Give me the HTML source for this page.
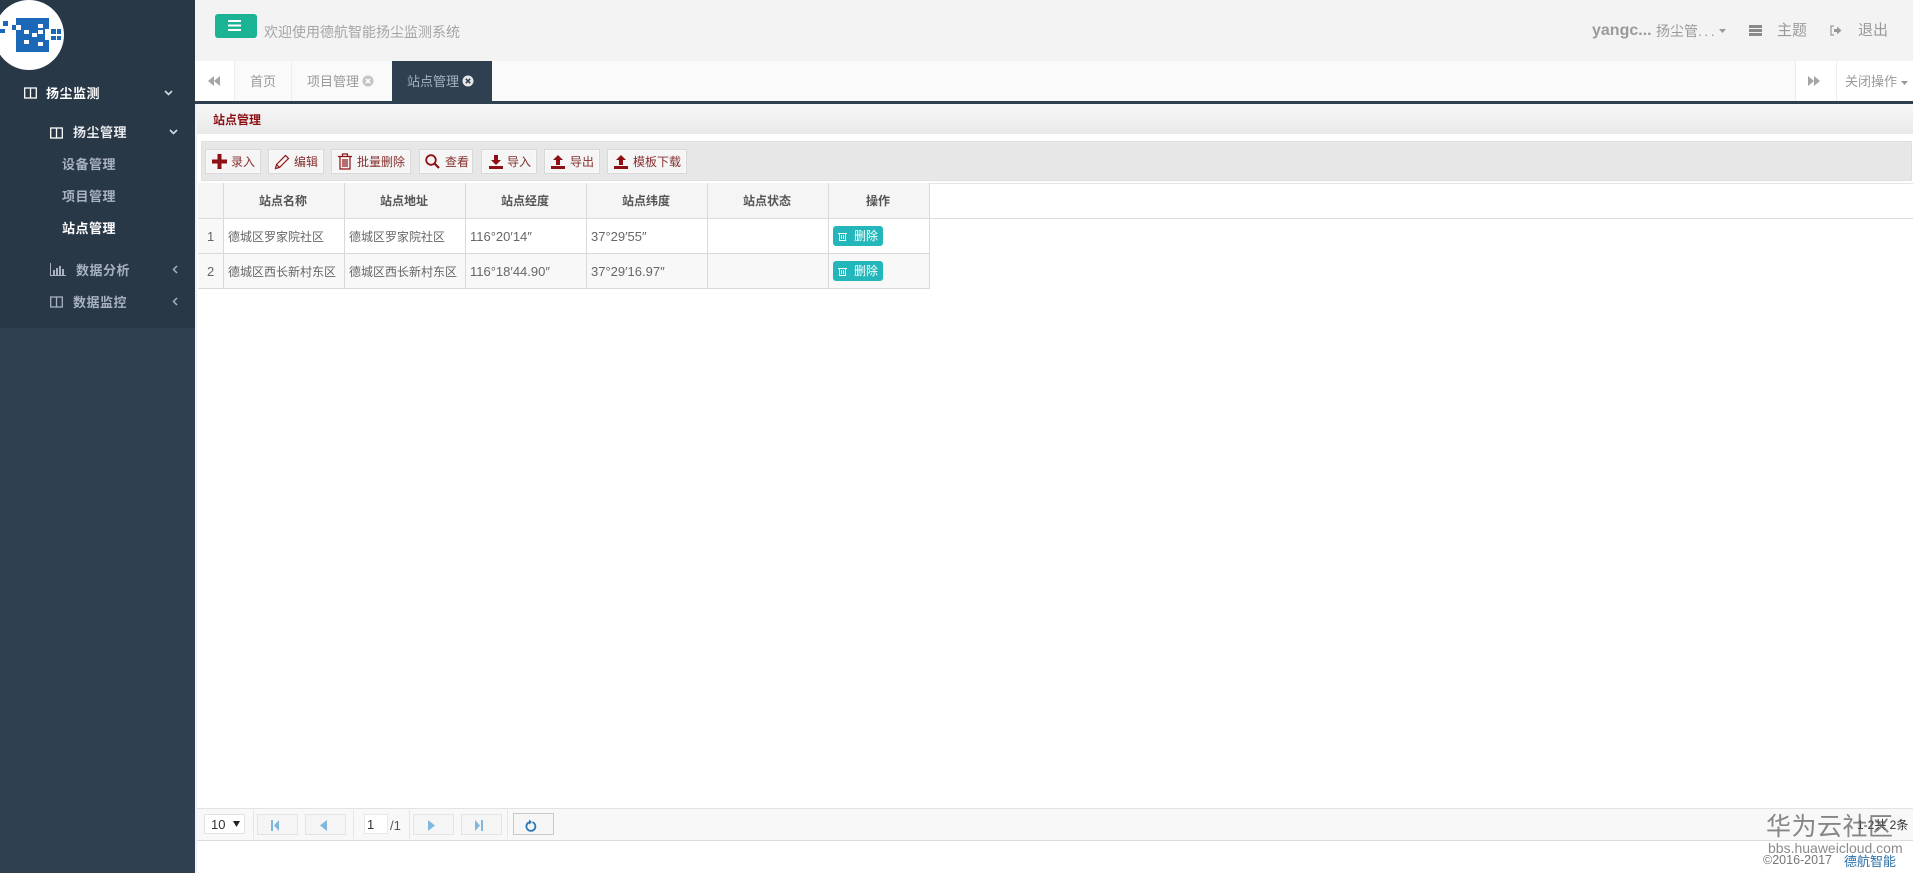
<!DOCTYPE html>
<html lang="zh">
<head>
<meta charset="utf-8">
<title>站点管理</title>
<style>
html,body{margin:0;padding:0;width:1913px;height:873px;overflow:hidden;background:#fff}
body{position:relative;font-family:"Liberation Sans","Noto Sans CJK SC",sans-serif;font-size:12px;color:#676a6c}
div,span,a{position:absolute;white-space:nowrap;box-sizing:border-box}
svg{position:absolute;display:block}
.nav{color:#a7b1c2;font-size:13px;font-weight:700;line-height:18px;letter-spacing:.5px}
.btn{top:149px;height:25px;background:#f5f5f5;border:1px solid #d8d8d8;box-shadow:inset 0 0 2px #fff;color:#7c1010;line-height:24px}
.btn span{top:0;line-height:25px;font-size:12px;color:#85302f}
.th{top:183px;height:35px;background:#f5f5f5;border-right:1px solid #d9d9d9;text-align:center;line-height:37px;font-weight:700;font-size:12px;color:#555;padding-right:2px}
.td{height:35px;border-right:1px solid #d9d9d9;border-bottom:1px solid #d9d9d9;line-height:36px;padding-left:4px;font-size:12px;color:#666;background:#fff}
.num{font-size:13px}
.del{left:833px;width:50px;height:20px;background:#23b7bb;border-radius:3px;color:#fff;font-size:12px;line-height:21px}
.pg{top:814px;width:41px;height:21px;background:#f5f5f5;border:1px solid #e4e4e4}
.sep{top:810px;width:1px;height:29px;background:#e6e6e6}
.tab{top:61px;height:40px;line-height:42px;color:#999;font-size:13px}
</style>
</head>
<body>
<!-- sidebar -->
<div style="left:0;top:0;width:195px;height:873px;background:#2f4050"></div>
<div style="left:0;top:0;width:195px;height:328px;background:#293846"></div>
<svg style="left:0;top:0" width="70" height="72" viewBox="0 0 70 72">
<circle cx="29" cy="35" r="35" fill="#fff"/>
<rect x="16" y="18" width="33" height="34" fill="#1b68b8"/>
<g fill="#1b68b8"><rect x="3" y="21" width="5" height="5"/><rect x="0" y="29" width="5" height="4"/><rect x="12" y="25" width="4" height="5"/>
<rect x="51" y="29" width="5" height="5"/><rect x="51" y="36" width="5" height="4"/><rect x="57" y="29" width="4" height="5"/><rect x="57" y="36" width="4" height="4"/></g>
<g fill="#fff"><rect x="16" y="25" width="5" height="5"/><rect x="24" y="30" width="5" height="4"/><rect x="38" y="24" width="5" height="4"/><rect x="38" y="30" width="5" height="4"/><rect x="32" y="33" width="5" height="4"/><rect x="24" y="40" width="5" height="4"/><rect x="38" y="42" width="5" height="4"/><rect x="45" y="29" width="4" height="11"/></g>
</svg>

<svg style="left:24px;top:87px" width="13" height="12" viewBox="0 0 13 12" fill="none" stroke="#fff" stroke-width="1.3"><rect x=".7" y="1" width="11.6" height="10"/><path d="M6.5 1v10"/></svg>
<div class="nav" style="left:46px;top:85px;color:#fff">扬尘监测</div>
<svg style="left:164px;top:90px" width="9" height="6" viewBox="0 0 9 6" fill="none" stroke="#d5dbe3" stroke-width="1.6"><path d="M1 1l3.5 3.5L8 1"/></svg>

<svg style="left:50px;top:127px" width="13" height="12" viewBox="0 0 13 12" fill="none" stroke="#fff" stroke-width="1.3"><rect x=".7" y="1" width="11.6" height="10"/><path d="M6.5 1v10"/></svg>
<div class="nav" style="left:73px;top:124px;color:#e6e9ee">扬尘管理</div>
<svg style="left:169px;top:129px" width="9" height="6" viewBox="0 0 9 6" fill="none" stroke="#d5dbe3" stroke-width="1.6"><path d="M1 1l3.5 3.5L8 1"/></svg>
<div class="nav" style="left:62px;top:156px">设备管理</div>
<div class="nav" style="left:62px;top:188px">项目管理</div>
<div class="nav" style="left:62px;top:220px;color:#fff">站点管理</div>

<svg style="left:50px;top:263px" width="16" height="13" viewBox="0 0 16 13" fill="#a7b1c2"><path d="M0 0h1v12h15v1H0z"/><rect x="3" y="7" width="2" height="5"/><rect x="6" y="5" width="2" height="7"/><rect x="9" y="3" width="2" height="9"/><rect x="12" y="6" width="2" height="6"/></svg>
<div class="nav" style="left:76px;top:262px">数据分析</div>
<svg style="left:172px;top:265px" width="6" height="9" viewBox="0 0 6 9" fill="none" stroke="#a7b1c2" stroke-width="1.5"><path d="M5 1L1.5 4.5 5 8"/></svg>
<svg style="left:50px;top:296px" width="13" height="12" viewBox="0 0 13 12" fill="none" stroke="#a7b1c2" stroke-width="1.3"><rect x=".7" y="1" width="11.6" height="10"/><path d="M6.5 1v10"/></svg>
<div class="nav" style="left:73px;top:294px">数据监控</div>
<svg style="left:172px;top:297px" width="6" height="9" viewBox="0 0 6 9" fill="none" stroke="#a7b1c2" stroke-width="1.5"><path d="M5 1L1.5 4.5 5 8"/></svg>

<!-- top bar -->
<div style="left:195px;top:0;width:1718px;height:61px;background:#f3f3f4"></div>
<div style="left:215px;top:14px;width:42px;height:24px;background:#1ab394;border-radius:3px"></div>
<svg style="left:228px;top:20px" width="14" height="12" viewBox="0 0 14 12" fill="#fff"><rect y="0" width="13" height="2"/><rect y="4.5" width="13" height="2"/><rect y="9" width="13" height="2"/></svg>
<div style="left:264px;top:22px;font-size:14px;line-height:20px;color:#a5a5a5">欢迎使用德航智能扬尘监测系统</div>

<div style="left:1592px;top:21px;font-size:16px;line-height:20px;font-weight:700;color:#9a9a9a">yangc...</div>
<div style="left:1656px;top:21px;font-size:14px;line-height:20px;color:#9a9a9a">扬尘管<span style="position:static;letter-spacing:2.500px">...</span></div>
<svg style="left:1719px;top:29px" width="8" height="4"><path d="M0 0h7L3.5 4z" fill="#999"/></svg>
<svg style="left:1749px;top:25px" width="13" height="11" viewBox="0 0 13 11" fill="#8a8a8a"><rect width="13" height="3"/><rect y="4" width="13" height="3"/><rect y="8" width="13" height="3"/></svg>
<div style="left:1777px;top:21px;font-size:15px;line-height:20px;color:#999">主题</div>
<svg style="left:1830px;top:25px" width="12" height="11" viewBox="0 0 12 11"><path d="M4 1H1v9h3" fill="none" stroke="#999" stroke-width="1.2"/><path d="M4 4h3V1.5L11.5 5.5 7 9.500V7H4z" fill="#999"/></svg>
<div style="left:1858px;top:21px;font-size:15px;line-height:20px;color:#999">退出</div>

<!-- tabs -->
<div style="left:195px;top:61px;width:1718px;height:40px;background:#fafafa"></div>
<div style="left:195px;top:61px;width:39px;height:40px;background:#fff"></div>
<svg style="left:208px;top:76px" width="12" height="10" viewBox="0 0 12 10" fill="#a5a5a5"><path d="M6 0v10L0 5zM12 0v10L6 5z"/></svg>
<div class="tab" style="left:234px;width:58px;text-align:center;border-left:1px solid #eee;border-right:1px solid #eee">首页</div>
<div class="tab" style="left:292px;width:100px;padding-left:15px">项目管理</div>
<svg style="left:362px;top:75px" width="12" height="12" viewBox="0 0 12 12"><circle cx="6" cy="6" r="5.500" fill="#c4c4c4"/><path d="M3.800 3.800l4.400 4.400M8.200 3.800l-4.400 4.400" stroke="#fff" stroke-width="1.500"/></svg>
<div class="tab" style="left:392px;width:100px;padding-left:15px;background:#2f4050;color:#a7b1c2">站点管理</div>
<svg style="left:462px;top:75px" width="12" height="12" viewBox="0 0 12 12"><circle cx="6" cy="6" r="5.500" fill="#e8e8e8"/><path d="M3.800 3.800l4.400 4.400M8.200 3.800l-4.400 4.400" stroke="#2f4050" stroke-width="1.500"/></svg>
<div style="left:1795px;top:61px;width:41px;height:40px;background:#fff;border-left:1px solid #eee"></div>
<svg style="left:1808px;top:76px" width="12" height="10" viewBox="0 0 12 10" fill="#a5a5a5"><path d="M0 0v10l6-5zM6 0v10l6-5z"/></svg>
<div class="tab" style="left:1836px;width:77px;padding-left:8px;background:#fff;border-left:1px solid #eee;font-size:13px;color:#999">关闭操作</div>
<svg style="left:1901px;top:81px" width="8" height="4"><path d="M0 0h7L3.5 4z" fill="#999"/></svg>
<div style="left:195px;top:101px;width:1718px;height:3px;background:#2f4050"></div>

<!-- content -->
<div style="left:195px;top:104px;width:2px;height:769px;background:#eef2f6"></div>
<div style="left:197px;top:104px;width:1716px;height:30px;background:linear-gradient(#f7f7f7,#e9e9e9)"></div>
<div style="left:213px;top:112px;font-size:12px;line-height:17px;font-weight:700;color:#8b0f14">站点管理</div>

<div style="left:201px;top:141px;width:1711px;height:40px;background:#e7e7e7;border:1px solid #e0e0e0"></div>
<div class="btn" style="left:205px;width:56px"><span style="left:25px">录入</span></div>
<svg style="left:212px;top:154px" width="15" height="15" viewBox="0 0 15 15" fill="#8e1014"><path d="M5.500 0h4v5.500H15v4H9.500V15h-4V9.500H0v-4h5.500z"/></svg>
<div class="btn" style="left:268px;width:56px"><span style="left:25px">编辑</span></div>
<svg style="left:274px;top:154px" width="16" height="16" viewBox="0 0 16 16" fill="none" stroke="#8e1014" stroke-width="1.200"><path d="M1.500 14.500l1-4L11.500 1.500l3 3-9 9z"/><path d="M2.500 10.500l3 3"/></svg>
<div class="btn" style="left:331px;width:80px"><span style="left:25px">批量删除</span></div>
<svg style="left:338px;top:153px" width="14" height="17" viewBox="0 0 14 17" fill="none" stroke="#8e1014" stroke-width="1.200"><path d="M0 3.500h14M4.500 3.500V1h5v2.500M2 3.500V16h10V3.500M5 6v8M7 6v8M9 6v8"/></svg>
<div class="btn" style="left:419px;width:54px"><span style="left:25px">查看</span></div>
<svg style="left:425px;top:154px" width="15" height="15" viewBox="0 0 15 15" fill="none" stroke="#8e1014" stroke-width="1.800"><circle cx="6" cy="6" r="4.800"/><path d="M9.500 9.500l4.500 4.500" stroke-width="2.200"/></svg>
<div class="btn" style="left:481px;width:56px"><span style="left:25px">导入</span></div>
<svg style="left:489px;top:155px" width="14" height="14" viewBox="0 0 14 14" fill="#8e1014"><path d="M5 0h4v5h3L7 10 2 5h3zM0 11h14v3H0z"/></svg>
<div class="btn" style="left:544px;width:56px"><span style="left:25px">导出</span></div>
<svg style="left:551px;top:155px" width="14" height="14" viewBox="0 0 14 14" fill="#8e1014"><path d="M5 10h4V5h3L7 0 2 5h3zM0 11h14v3H0z"/></svg>
<div class="btn" style="left:607px;width:80px"><span style="left:25px">模板下载</span></div>
<svg style="left:614px;top:155px" width="14" height="14" viewBox="0 0 14 14" fill="#8e1014"><path d="M5 10h4V5h3L7 0 2 5h3zM0 11h14v3H0z"/></svg>

<!-- table -->
<div style="left:198px;top:183px;width:1715px;height:1px;background:#e6e6e6"></div>
<div style="left:198px;top:218px;width:1715px;height:1px;background:#dcdcdc"></div>
<div class="th" style="left:198px;width:26px"></div>
<div class="th" style="left:224px;width:121px">站点名称</div>
<div class="th" style="left:345px;width:121px">站点地址</div>
<div class="th" style="left:466px;width:121px">站点经度</div>
<div class="th" style="left:587px;width:121px">站点纬度</div>
<div class="th" style="left:708px;width:121px">站点状态</div>
<div class="th" style="left:829px;width:101px">操作</div>

<div class="td num" style="left:198px;top:219px;width:26px;background:#f8f8f8;padding-left:9px">1</div>
<div class="td" style="left:224px;top:219px;width:121px">德城区罗家院社区</div>
<div class="td" style="left:345px;top:219px;width:121px">德城区罗家院社区</div>
<div class="td num" style="left:466px;top:219px;width:121px">116°20′14″</div>
<div class="td num" style="left:587px;top:219px;width:121px">37°29′55″</div>
<div class="td" style="left:708px;top:219px;width:121px"></div>
<div class="td" style="left:829px;top:219px;width:101px"></div>
<div class="td num" style="left:198px;top:254px;width:26px;background:#f8f8f8;padding-left:9px">2</div>
<div class="td" style="left:224px;top:254px;width:121px;background:#f8f8f8">德城区西长新村东区</div>
<div class="td" style="left:345px;top:254px;width:121px;background:#f8f8f8">德城区西长新村东区</div>
<div class="td num" style="left:466px;top:254px;width:121px;background:#f8f8f8">116°18′44.90″</div>
<div class="td num" style="left:587px;top:254px;width:121px;background:#f8f8f8">37°29′16.97″</div>
<div class="td" style="left:708px;top:254px;width:121px;background:#f8f8f8"></div>
<div class="td" style="left:829px;top:254px;width:101px;background:#f8f8f8"></div>

<div class="del" style="top:226px"><span style="left:21px;top:0">删除</span></div>
<svg style="left:838px;top:232px" width="9" height="9" viewBox="0 0 9 9" fill="none" stroke="#fff"><path d="M0 1.500h9M1.500 1.500v7h6v-7M3.500 3v4M5.500 3v4"/></svg>
<div class="del" style="top:261px"><span style="left:21px;top:0">删除</span></div>
<svg style="left:838px;top:267px" width="9" height="9" viewBox="0 0 9 9" fill="none" stroke="#fff"><path d="M0 1.500h9M1.500 1.500v7h6v-7M3.500 3v4M5.500 3v4"/></svg>

<!-- pager -->
<div style="left:197px;top:808px;width:1716px;height:33px;background:#f8f8f8;border-top:1px solid #e2e2e2;border-bottom:1px solid #dcdcdc"></div>
<div style="left:204px;top:814px;width:41px;height:20px;background:#fff;border:1px solid #e2e2e2;border-radius:2px;font-size:13px;line-height:19px;padding-left:6px;color:#333">10</div>
<svg style="left:233px;top:821px" width="8" height="6"><path d="M0 0h7L3.500 6z" fill="#222"/></svg>
<div class="sep" style="left:253px"></div>
<div class="pg" style="left:257px"></div>
<svg style="left:271px;top:820px" width="8" height="11" viewBox="0 0 8 11" fill="#7fb8dc"><rect width="2" height="11"/><path d="M8 0v11L3 5.500z"/></svg>
<div class="pg" style="left:305px"></div>
<svg style="left:320px;top:820px" width="7" height="11" viewBox="0 0 7 11" fill="#7fb8dc"><path d="M7 0v11L0 5.500z"/></svg>
<div class="sep" style="left:353px"></div>
<div style="left:364px;top:814px;width:24px;height:20px;background:#fff;border:1px solid #e8e8e8;font-size:13px;line-height:19px;padding-left:2px;color:#333">1</div>
<div style="left:390px;top:817px;font-size:13px;line-height:17px;color:#555">/1</div>
<div class="sep" style="left:409px"></div>
<div class="pg" style="left:413px"></div>
<svg style="left:428px;top:820px" width="7" height="11" viewBox="0 0 7 11" fill="#7fb8dc"><path d="M0 0v11l7-5.500z"/></svg>
<div class="pg" style="left:461px"></div>
<svg style="left:475px;top:820px" width="8" height="11" viewBox="0 0 8 11" fill="#7fb8dc"><path d="M0 0v11l5-5.500z"/><rect x="6" width="2" height="11"/></svg>
<div class="sep" style="left:507px"></div>
<div style="left:513px;top:813px;width:41px;height:22px;background:#f6f6f6;border:1px solid #c8c8c8"></div>
<svg style="left:525px;top:819px" width="12" height="13" viewBox="0 0 12 13" fill="none" stroke="#2a78b8" stroke-width="1.800"><path d="M7.500 3.200A4.500 4.500 0 1 1 4 3.300"/><path d="M4 0.500v5.200L7 3z" fill="#2a78b8" stroke="none"/></svg>
<div style="left:1857px;top:817px;font-size:12px;line-height:17px;color:#333">1-2共 2条</div>

<!-- footer -->
<div style="left:1763px;top:852px;font-size:12.500px;line-height:17px;color:#777">©2016-2017</div>
<div style="left:1844px;top:853px;font-size:13px;line-height:17px;color:#2a6fa8">德航智能</div>

<!-- watermark -->
<div style="left:1766px;top:811px;font-size:25px;line-height:32px;letter-spacing:.5px;color:rgba(90,90,90,.72)">华为云社区</div>
<div style="left:1768px;top:840px;font-size:14px;line-height:16px;color:rgba(110,110,110,.8)">bbs.huaweicloud.com</div>
</body>
</html>
